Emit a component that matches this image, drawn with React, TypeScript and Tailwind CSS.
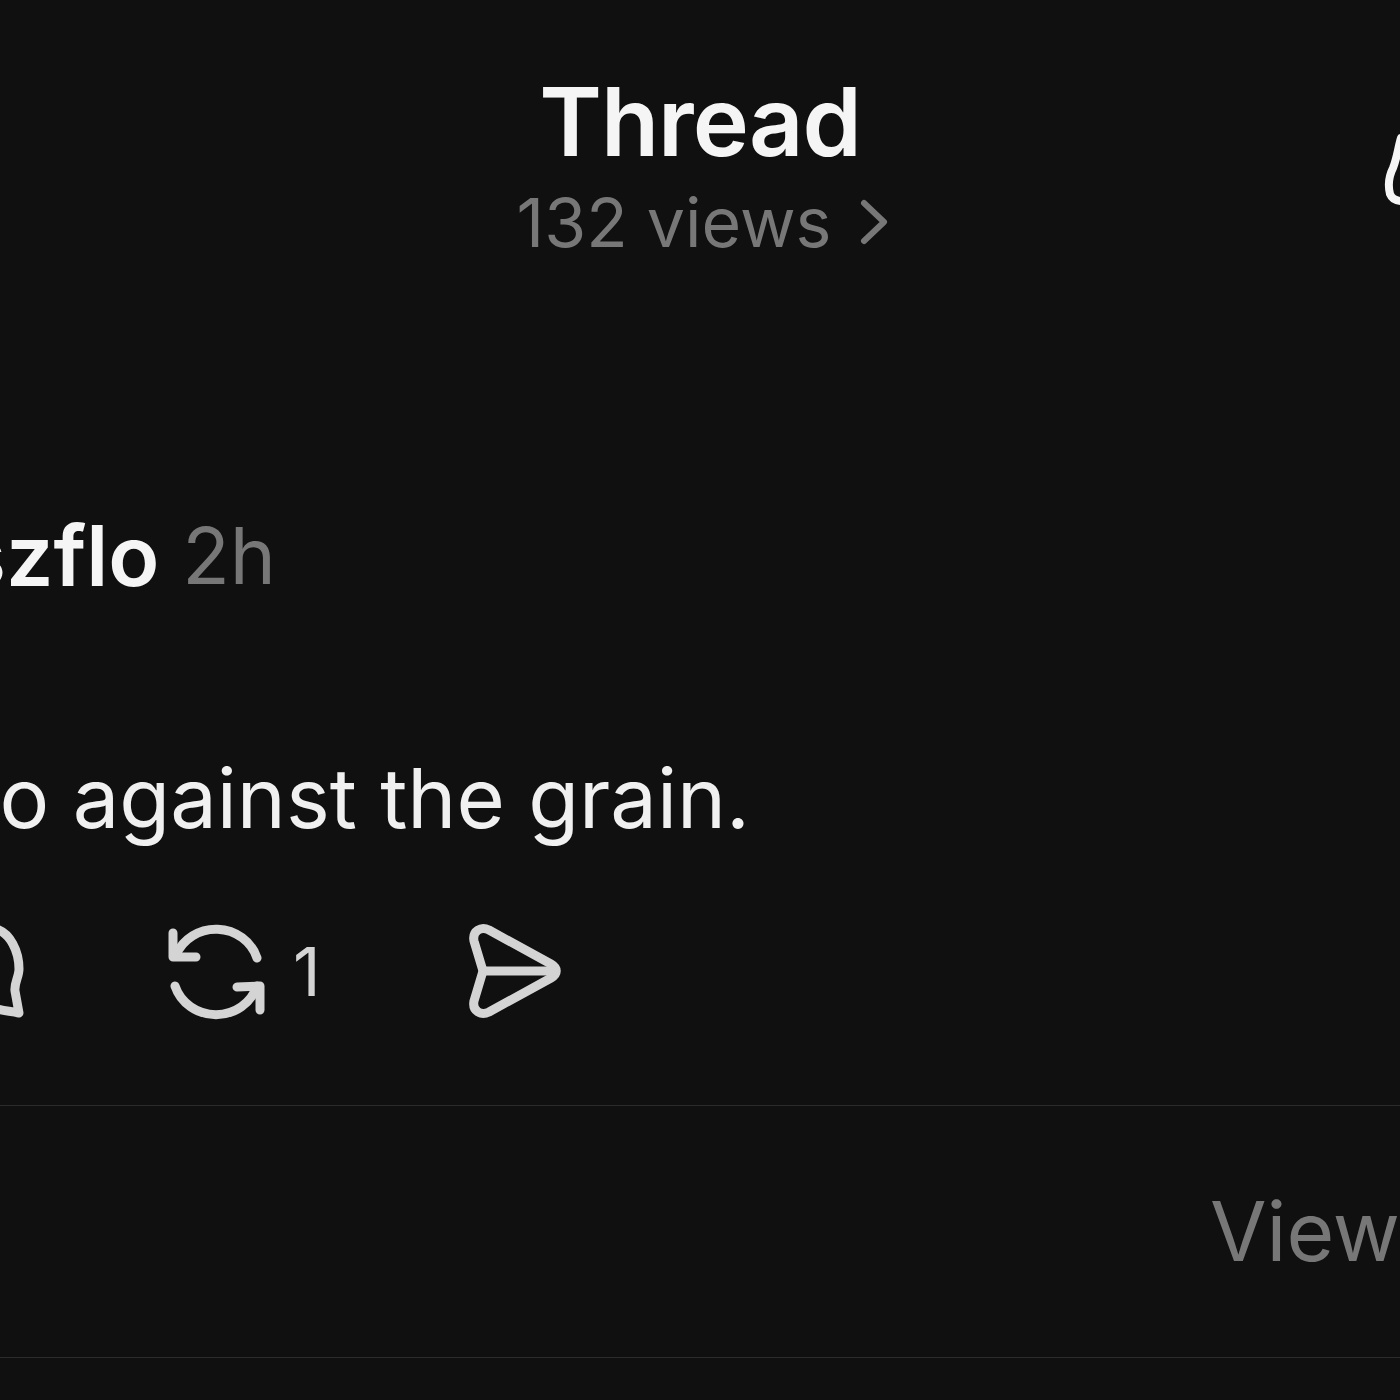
export default function App() {
  return (
    <div className="relative flex h-[1400px] w-[1400px] flex-col overflow-hidden bg-[#101010] font-['Inter',sans-serif] text-white">
      <header className="flex h-[270px] flex-col items-center pt-[64px]">
        <h1 className="text-[95px] leading-[116px] font-semibold tracking-[-0.01em] text-[#f5f5f5]">Thread</h1>
        <div className="flex h-[84px] items-center gap-[28px] pl-[6px] text-[#777777]">
          <span className="text-[68px] leading-[84px]">132 views</span>
          <svg width="30" height="48" viewBox="0 0 30 48" fill="none" stroke="#777777" strokeWidth="6" strokeLinecap="round" strokeLinejoin="round">
            <path d="M5 5 L25 24 L5 43" />
          </svg>
        </div>
      </header>
      <svg className="absolute top-[120px] left-[1380px]" width="20" height="90" viewBox="0 0 20 90" fill="none" stroke="#f5f5f5" strokeWidth="8" strokeLinecap="round">
        <path d="M21 18 C18 28 17 38 13 48 C9 56 8 66 10 74 C12 79 16 81 22 81" />
      </svg>
      <div className="mt-[231px] flex h-[110px] w-[276px] items-center justify-end gap-[23px] self-start whitespace-nowrap">
        <span className="text-[84px] leading-[100px] font-semibold text-[#f5f5f5]">szflo</span>
        <span className="text-[78px] leading-[100px] text-[#777777]">2h</span>
      </div>
      <div className="mt-[132px] flex h-[110px] w-[750px] items-center justify-end self-start whitespace-nowrap">
        <span className="text-[83px] leading-[100px] text-[#f0f0f0]">do against the grain.</span>
      </div>
      <div className="mt-[68px] flex h-[100px] items-center self-start">
        <svg className="ml-[-40px]" width="64" height="100" viewBox="0 0 64 100" fill="none" stroke="#d4d4d4" strokeWidth="9" strokeLinecap="round" strokeLinejoin="round">
          <path d="M36 8 C50 12 59 30 59 48 C59 56 54 62 55 70 L59 92 C50 90 42 90 34 87" />
        </svg>
        <svg className="ml-[143px]" width="100" height="100" viewBox="0 0 100 100" fill="none" stroke="#d4d4d4" strokeWidth="9" strokeLinecap="round" strokeLinejoin="round">
          <path d="M6 12 L6 36 L29 36" />
          <path d="M9 34 A43 41 0 0 1 90 37" />
          <path d="M93 89 L93 65 L70 66" />
          <path d="M90 65 A43 41 0 0 1 8 65" />
        </svg>
        <span className="ml-[26px] w-[34px] text-[68px] leading-[80px] text-[#d4d4d4]">1</span>
        <svg className="ml-[138px]" width="96" height="100" viewBox="0 0 96 100" fill="none" stroke="#d4d4d4" strokeWidth="9" strokeLinecap="round" strokeLinejoin="round">
          <path d="M18 50 L9 20 C7 10 16 5 24 9 L86 43 C93 47 93 53 86 57 L24 91 C16 95 7 90 9 80 Z" />
          <path d="M18 50 L90 50" />
        </svg>
      </div>
      <div className="mt-[84px] flex h-[253px] items-center overflow-hidden border-y border-[#2b2b2b] whitespace-nowrap">
        <span className="ml-[1210px] text-[82px] leading-[90px] text-[#777777]">View replies</span>
      </div>
    </div>
  );
}
